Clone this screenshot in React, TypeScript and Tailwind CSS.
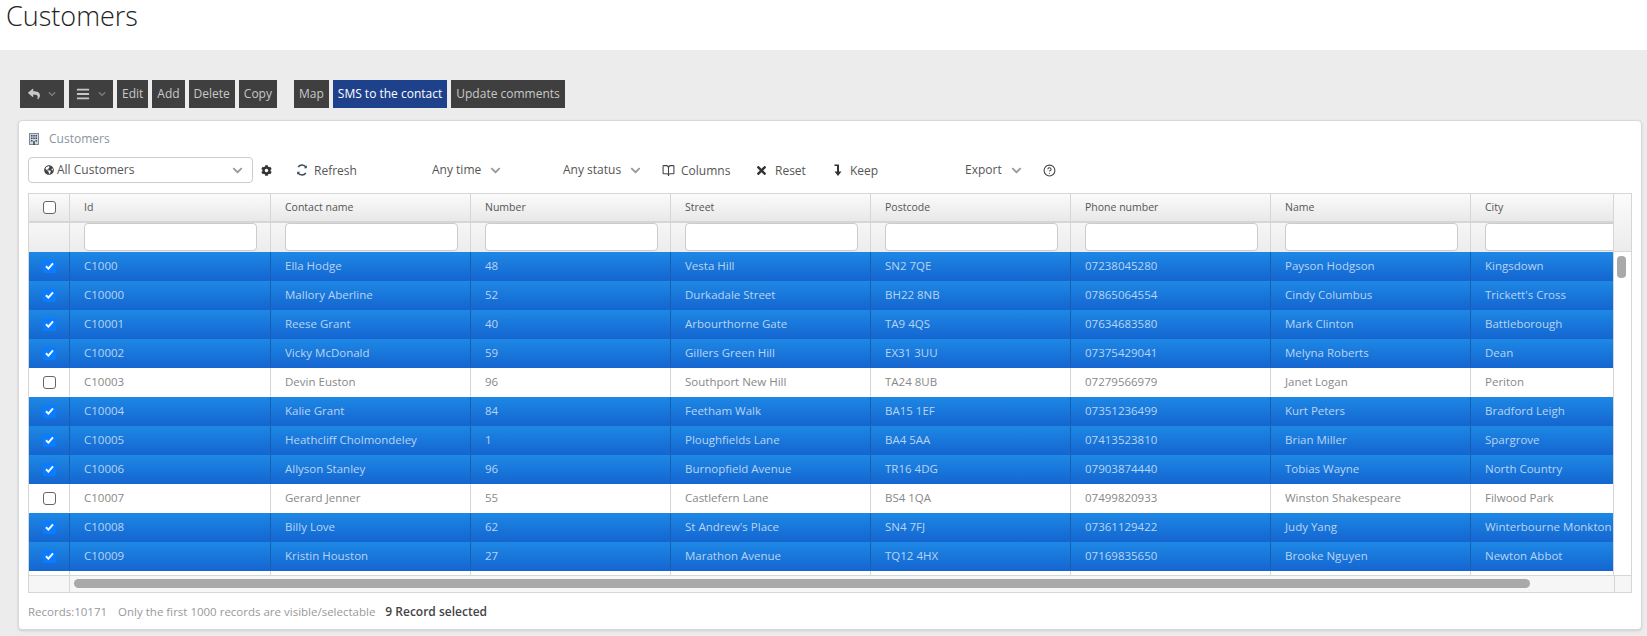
import { BookOpen, CircleHelp } from "lucide-react";
import { FaBars, FaChevronDown, FaCog, FaGlobeAmericas, FaReply, FaTimes } from "react-icons/fa";

const columns = ["Id", "Contact name", "Number", "Street", "Postcode", "Phone number", "Name", "City"];

const rows = [
  ["C1000", "Ella Hodge", "48", "Vesta Hill", "SN2 7QE", "07238045280", "Payson Hodgson", "Kingsdown", true],
  ["C10000", "Mallory Aberline", "52", "Durkadale Street", "BH22 8NB", "07865064554", "Cindy Columbus", "Trickett's Cross", true],
  ["C10001", "Reese Grant", "40", "Arbourthorne Gate", "TA9 4QS", "07634683580", "Mark Clinton", "Battleborough", true],
  ["C10002", "Vicky McDonald", "59", "Gillers Green Hill", "EX31 3UU", "07375429041", "Melyna Roberts", "Dean", true],
  ["C10003", "Devin Euston", "96", "Southport New Hill", "TA24 8UB", "07279566979", "Janet Logan", "Periton", false],
  ["C10004", "Kalie Grant", "84", "Feetham Walk", "BA15 1EF", "07351236499", "Kurt Peters", "Bradford Leigh", true],
  ["C10005", "Heathcliff Cholmondeley", "1", "Ploughfields Lane", "BA4 5AA", "07413523810", "Brian Miller", "Spargrove", true],
  ["C10006", "Allyson Stanley", "96", "Burnopfield Avenue", "TR16 4DG", "07903874440", "Tobias Wayne", "North Country", true],
  ["C10007", "Gerard Jenner", "55", "Castlefern Lane", "BS4 1QA", "07499820933", "Winston Shakespeare", "Filwood Park", false],
  ["C10008", "Billy Love", "62", "St Andrew's Place", "SN4 7FJ", "07361129422", "Judy Yang", "Winterbourne Monkton", true],
  ["C10009", "Kristin Houston", "27", "Marathon Avenue", "TQ12 4HX", "07169835650", "Brooke Nguyen", "Newton Abbot", true],
] as const;

function ToolButton({ label, primary }: { label: string; primary?: boolean }) {
  return (
    <button className={`h-7 px-[5px] text-[12px] ${primary ? "bg-[#1e418c] text-white" : "bg-[#3f3f3f] text-[#c8c8c8]"}`}>
      {label}
    </button>
  );
}

function IconButton({ children }: { children: React.ReactNode }) {
  return (
    <button className="h-7 w-11 flex items-center justify-center gap-[8px] bg-[#3f3f3f] text-[#c8c8c8]">
      {children}
      <FaChevronDown className="text-[8px] text-[#808080]" />
    </button>
  );
}

export default function App() {
  return (
    <div className="h-[636px] overflow-hidden bg-[#ececec] font-['Open_Sans',sans-serif]">
      {/* TITLE */}
      <header className="h-[50px] bg-white pl-[6px]">
        <h1 className="text-[27px] leading-[31px] font-light text-[#222]">Customers</h1>
      </header>

      {/* ACTIONS */}
      <div className="mt-[30px] ml-5 flex gap-1">
        <IconButton><FaReply className="text-[12px]" /></IconButton>
        <div className="ml-[1px]">
          <IconButton><FaBars className="text-[14px]" /></IconButton>
        </div>
        <ToolButton label="Edit" />
        <ToolButton label="Add" />
        <ToolButton label="Delete" />
        <ToolButton label="Copy" />
        <div className="w-[9px]" />
        <ToolButton label="Map" />
        <ToolButton label="SMS to the contact" primary />
        <ToolButton label="Update comments" />
      </div>

      {/* CARD */}
      <section className="mt-3 ml-[18px] mr-[5px] h-[510px] rounded-[4px] border border-[#d8d8d8] bg-white pl-[9px] pr-[10px] shadow-sm">
        <div className="h-9 flex items-center text-[12px] text-[#8a94a0]">
          <svg width="10" height="12" viewBox="0 0 10 12" className="ml-[1px]">
            <rect x="0.5" y="0.5" width="9" height="11" fill="#cfd6df" stroke="#7d8998" />
            <path d="M2 2h1.500v1.500H2zM4.250 2h1.500v1.500h-1.500zM6.500 2H8v1.500H6.500zM2 4.500h1.500V6H2zM4.250 4.500h1.500V6h-1.500zM6.500 4.500H8V6H6.500zM2 7h1.500v1.500H2zM6.500 7H8v1.500H6.500zM4.250 8h1.500v4h-1.500z" fill="#3d4a5c" />
          </svg>
          <span className="ml-[10px]">Customers</span>
        </div>

        {/* FILTERS */}
        <div className="h-[26px] flex items-center text-[12px] text-[#555]">
          <div className="w-[225px] h-[26px] shrink-0 flex items-center justify-between rounded-[4px] border border-[#ccc] pl-[15px] pr-[9px]">
            <span className="flex items-center gap-[3px]"><FaGlobeAmericas className="text-[10px] text-[#444]" />All Customers</span>
            <FaChevronDown className="text-[11px] text-[#999]" />
          </div>
          <FaCog className="ml-[8px] text-[11px] text-[#333]" />
          <svg width="12" height="12" viewBox="0 0 12 12" className="ml-[24px]" fill="none" stroke="#3d4a5c" strokeWidth="1.500">
            <path d="M2.200 3A4.800 4.800 0 0 1 10 3.200M9.800 9A4.800 4.800 0 0 1 2 8.800" />
            <path d="M10.800 1.200v3H7.800zM1.200 10.800v-3h3z" fill="#3d4a5c" stroke="none" />
          </svg>
          <span className="ml-[6px] w-[118px] pt-[2px]">Refresh</span>
          <span className="w-[49px] whitespace-nowrap">Any time</span>
          <FaChevronDown className="ml-[9px] text-[11px] text-[#999]" />
          <span className="ml-[62px] w-[58px] whitespace-nowrap">Any status</span>
          <FaChevronDown className="ml-[9px] text-[11px] text-[#999]" />
          <BookOpen size={13} className="ml-[21px] text-[#444]" />
          <span className="ml-[6px] w-[50px] pt-[2px]">Columns</span>
          <FaTimes className="ml-[24px] text-[13px] text-[#333]" />
          <span className="ml-[7px] w-[31px] pt-[2px]">Reset</span>
          <svg width="8" height="12" viewBox="0 0 8 12" className="ml-[28px]" fill="#333">
            <path d="M0.500 0.500H5V7.500H7.500L4 12 0.500 7.500H3V2H0.500z" />
          </svg>
          <span className="ml-[8px] w-[29px] pt-[2px]">Keep</span>
          <span className="ml-[86px] w-[37px]">Export</span>
          <FaChevronDown className="ml-[9px] text-[11px] text-[#999]" />
          <CircleHelp size={13} className="ml-[21px] text-[#444]" />
        </div>

        {/* GRID */}
        <div className="mt-[10px] h-[400px] w-[1604px] flex flex-col border border-[#d6d6d6]">
          <div className="flex h-[381px]">
            <div className="w-[1585px] overflow-hidden">
              <div className="h-[29px] flex border-b-2 border-[#d6d6d6] bg-gradient-to-b from-[#fbfbfb] to-[#e8e8e8] text-[10.500px] text-[#555]">
                <div className="w-[41px] shrink-0 flex items-center justify-center border-r border-[#d6d6d6]">
                  <span className="size-[13px] rounded-[3px] border border-[#666] bg-white" />
                </div>
                {columns.map((c, i) => (
                  <div key={c} className={`${i === 0 ? "w-[201px]" : "w-[200px]"} shrink-0 flex items-center pl-[14px] border-r border-[#d6d6d6]`}>{c}</div>
                ))}
              </div>
              <div className="h-[29px] flex bg-gradient-to-b from-[#f6f6f6] to-[#ececec]">
                <div className="w-[41px] shrink-0 border-r border-[#d6d6d6]" />
                {columns.map((c, i) => (
                  <div key={c} className={`${i === 0 ? "w-[201px]" : "w-[200px]"} shrink-0 pl-[14px] border-r border-[#d6d6d6]`}>
                    <input className="block w-[173px] h-[28px] rounded-[4px] border border-[#ccc] bg-white" />
                  </div>
                ))}
              </div>
              {rows.map((r) => (
                <div
                  key={r[0]}
                  className={`h-[29px] flex text-[11.500px] pb-px ${r[8] ? "bg-gradient-to-b from-[#1e88e5] to-[#1565d0] text-[#b9d4f2]" : "bg-white text-[#888]"}`}
                >
                  <div className={`w-[41px] shrink-0 flex items-center justify-center border-r ${r[8] ? "border-[#1a5fae]" : "border-[#d6d6d6]"}`}>
                    {r[8] ? (
                      <span className="size-[13px] rounded-[2px] bg-[#0a7cff] flex items-center justify-center">
                        <svg width="9" height="8" viewBox="0 0 9 8"><path d="M1 4.200 3.400 6.600 8 1.400" fill="none" stroke="#fff" strokeWidth="2" /></svg>
                      </span>
                    ) : (
                      <span className="size-[13px] rounded-[3px] border border-[#666] bg-white" />
                    )}
                  </div>
                  {r.slice(0, 8).map((v, i) => (
                    <div key={i} className={`${i === 0 ? "w-[201px]" : "w-[200px]"} shrink-0 flex items-center pl-[14px] whitespace-nowrap border-r ${r[8] ? "border-[#1a5fae]" : "border-[#d6d6d6]"}`}>
                      {v as string}
                    </div>
                  ))}
                </div>
              ))}
              <div className="h-[5px] flex">
                <div className="w-[41px] shrink-0 border-r border-[#d6d6d6]" />
                {columns.map((c, i) => (
                  <div key={c} className={`${i === 0 ? "w-[201px]" : "w-[200px]"} shrink-0 border-r border-[#d6d6d6]`} />
                ))}
              </div>
            </div>
            <div className="w-[18px] flex flex-col border-l border-[#d6d6d6]">
              <div className="h-[58px] shrink-0 bg-gradient-to-b from-[#fbfbfb] to-[#ececec] border-b border-[#d6d6d6]" />
              <div className="flex-1 pt-[4px] pl-[3px]">
                <div className="w-[9px] h-[22px] rounded-[4px] bg-[#a9a9a9]" />
              </div>
            </div>
          </div>
          <div className="flex-1 flex border-t border-[#d6d6d6] bg-[#f6f6f6]">
            <div className="w-[41px] border-r border-[#d6d6d6]" />
            <div className="w-[1544px] pl-[4px] pt-[3px]">
              <div className="w-[1456px] h-[9px] rounded-[5px] bg-[#a9a9a9]" />
            </div>
            <div className="flex-1 border-l border-[#d6d6d6]" />
          </div>
        </div>

        {/* FOOTER */}
        <div className="mt-[10px] flex items-center text-[11.500px] text-[#999]">
          <span>Records:10171</span>
          <span className="ml-[11px]">Only the first 1000 records are visible/selectable</span>
          <span className="ml-[10px] text-[12px] font-semibold text-[#444]">9 Record selected</span>
        </div>
      </section>
    </div>
  );
}
